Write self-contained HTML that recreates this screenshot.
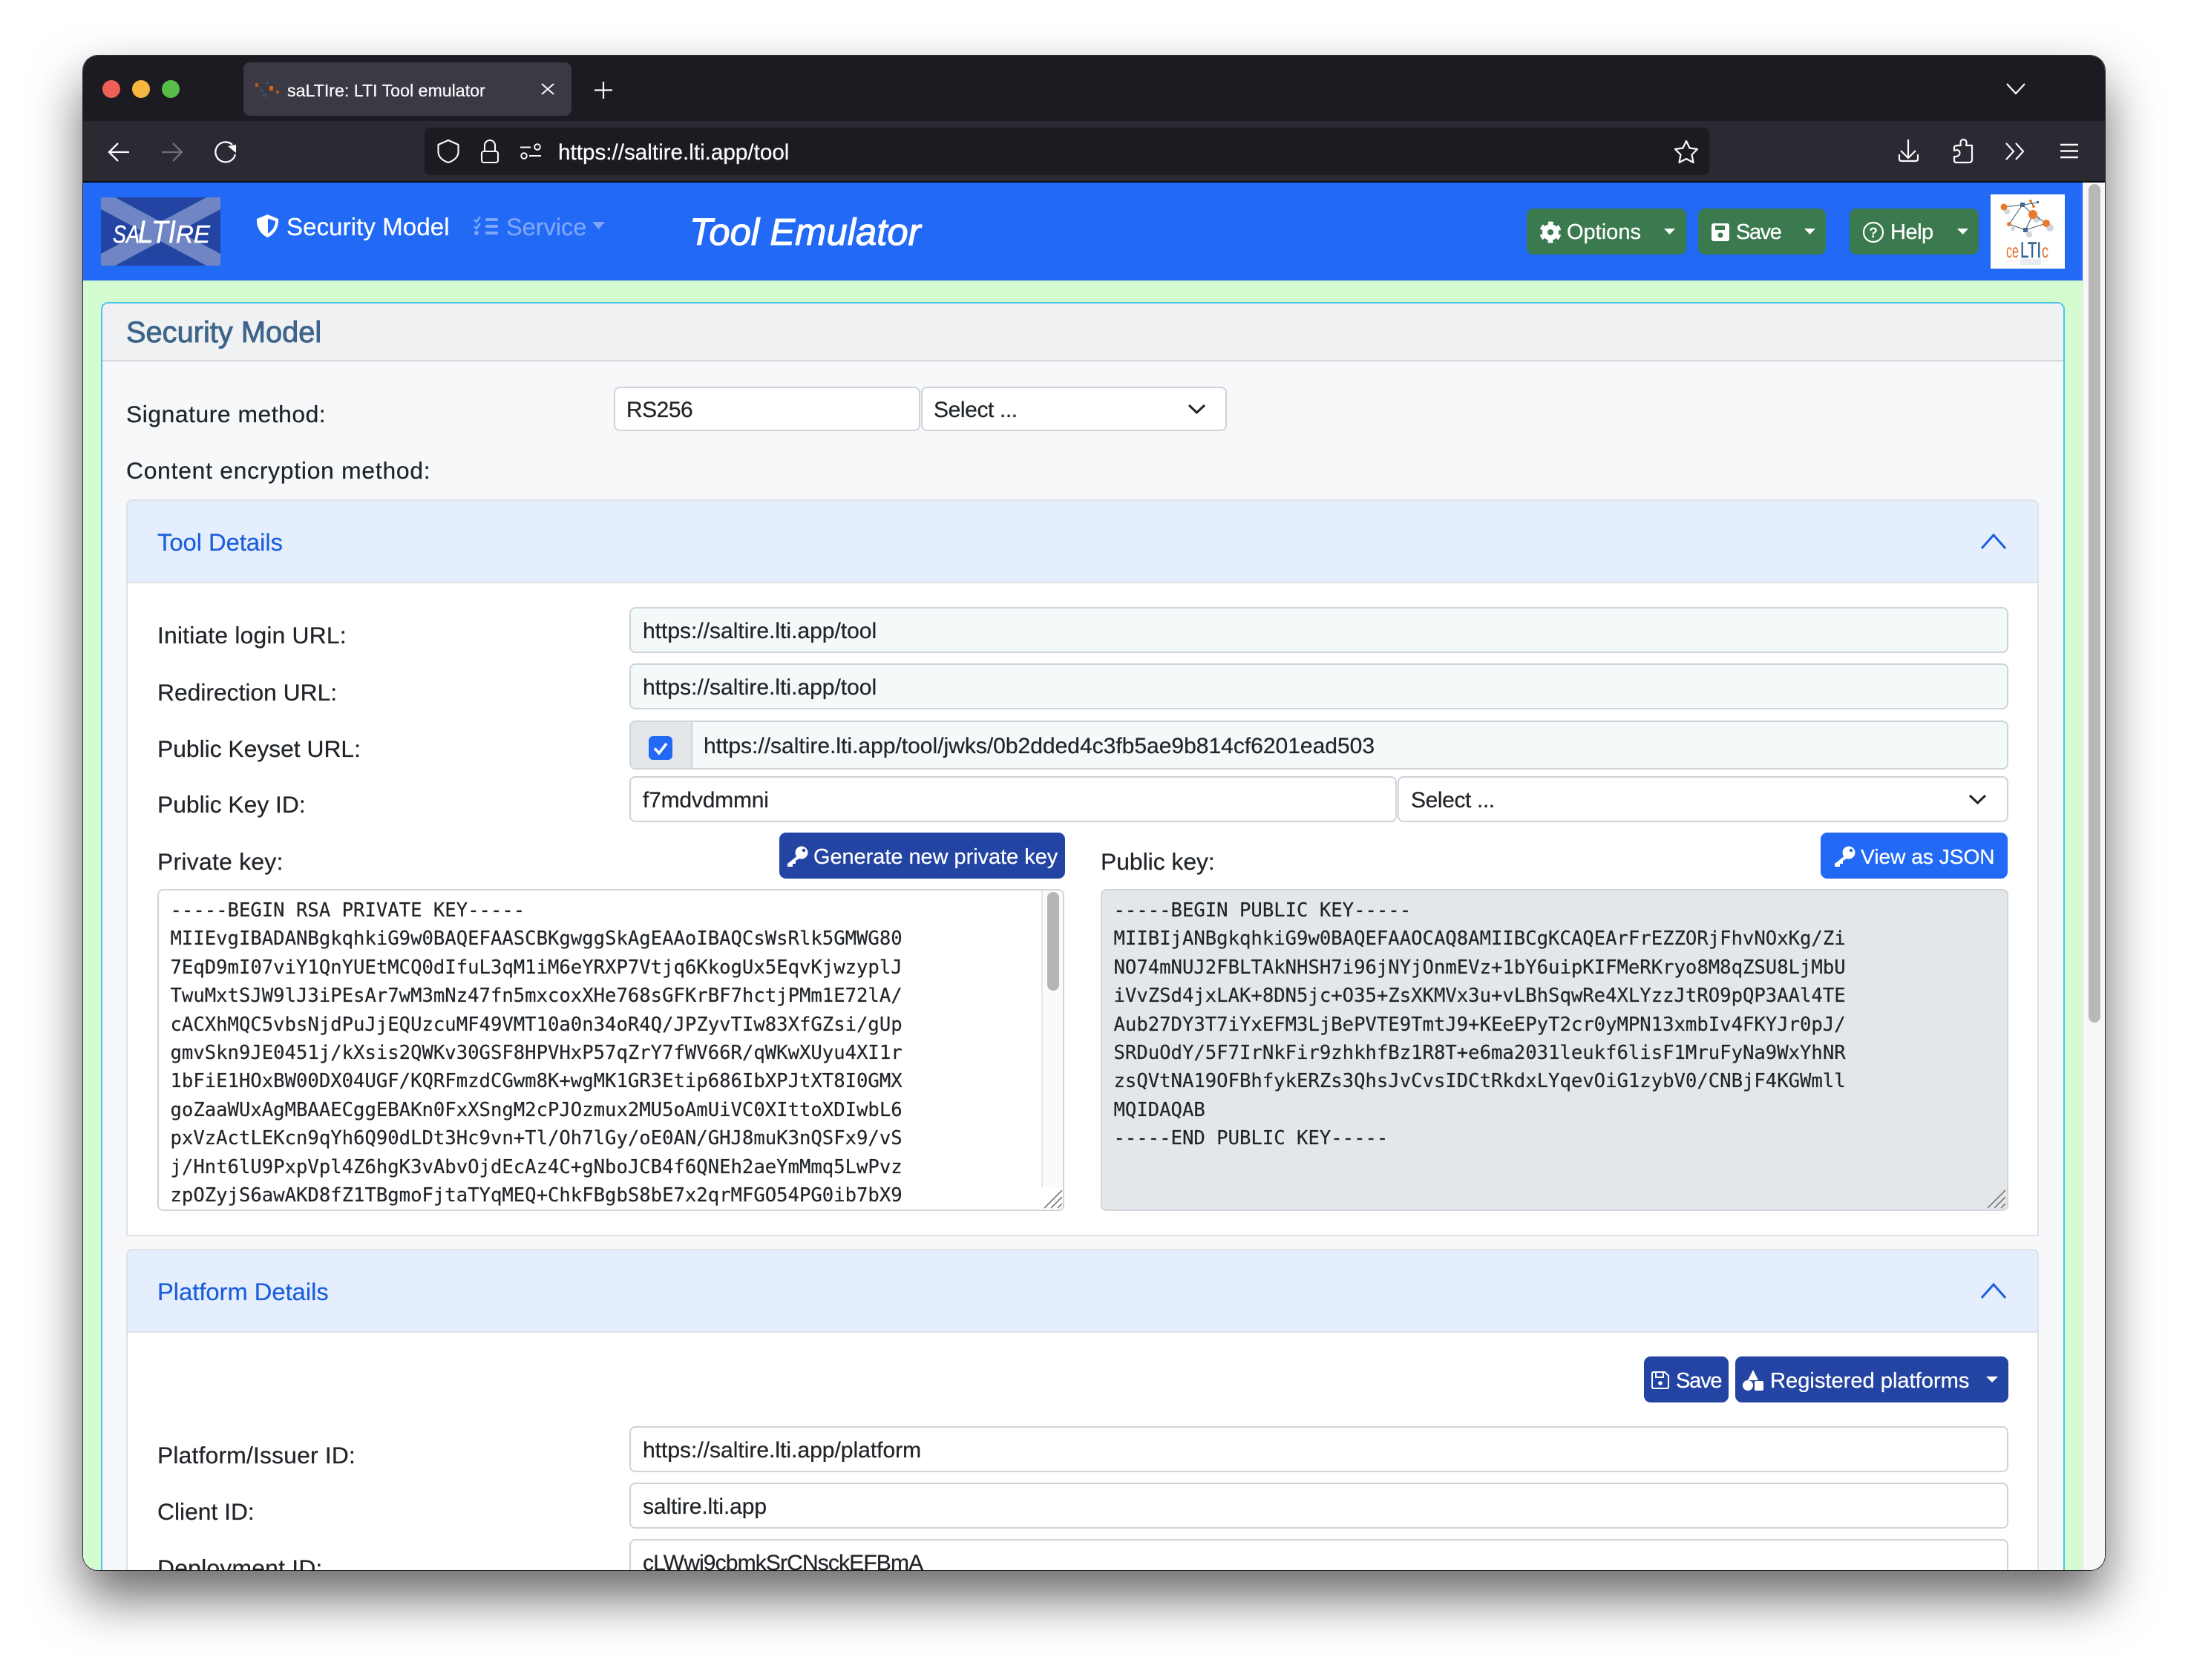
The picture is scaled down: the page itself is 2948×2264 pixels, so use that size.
<!DOCTYPE html>
<html lang="en"><head><meta charset="utf-8"><title>saLTIre: LTI Tool emulator</title>
<style>
html,body{margin:0;padding:0;width:2948px;height:2264px;overflow:hidden;background:#fff}
body{font-family:"Liberation Sans",sans-serif;color:#212529}
.a{position:absolute}
.shadow{position:absolute;left:112px;top:75px;width:2724px;height:2041px;border-radius:20px;box-shadow:0 36px 70px rgba(0,0,0,.6),0 0 0 1px #333}
.win{position:absolute;left:0;top:0;width:2948px;height:2264px;clip-path:inset(75px 112px 148px 112px round 20px);background:#f7f7f7}
.t{position:absolute;white-space:nowrap;line-height:40px;height:40px;-webkit-text-stroke:.25px currentColor}
.lbl{font-size:31.8px;color:#212529;left:212px}
.box{position:absolute;box-sizing:border-box;border:2px solid #ced4da;border-radius:8px;background:#fff;display:flex;align-items:center;padding:4px 0 0 16px;font-size:30px;white-space:nowrap;color:#212529;-webkit-text-stroke:.25px currentColor}
.ro{background:#f4f9f9}
.btn{position:absolute;box-sizing:border-box;border-radius:9px;color:#fff;font-size:29px;display:block}
.green{background:#3b7a4f}.navy{background:#2344a3}.blue{background:#226af5}
.head{position:absolute;left:170px;width:2577px;box-sizing:border-box;background:#e4eefd;border:2px solid #dee2e6;height:113px;border-radius:8px 8px 0 0}
.acc{position:absolute;left:170px;width:2577px;box-sizing:border-box;background:#fff;border:2px solid #dee2e6;border-top:0}
.h{color:#1d5fdb;font-size:32.700px;left:212px}
pre{position:absolute;margin:0;font-family:"DejaVu Sans Mono","Liberation Mono",monospace;font-size:25.6px;line-height:38.4px;color:#212529;-webkit-text-stroke:.2px currentColor}
svg{position:absolute;overflow:visible}
</style></head>
<body>
<div class="shadow"></div>
<div class="win">
  <!-- browser chrome -->
  <div class="a" style="left:112px;top:75px;width:2724px;height:88px;background:#1c1b22"></div>
  <div class="a" style="left:112px;top:163px;width:2724px;height:81px;background:#2b2a33"></div>
  <div class="a" style="left:112px;top:244px;width:2724px;height:2px;background:#0a0a0c"></div>
  <div class="a" style="left:138px;top:108px;width:24px;height:24px;border-radius:50%;background:#ee6055"></div>
  <div class="a" style="left:178px;top:108px;width:24px;height:24px;border-radius:50%;background:#f6b73f"></div>
  <div class="a" style="left:218px;top:108px;width:24px;height:24px;border-radius:50%;background:#57bd4b"></div>
  <div class="a" style="left:328px;top:84px;width:442px;height:72px;border-radius:9px;background:#3a3944"></div>
  <svg class="a" style="left:0;top:0" width="2948" height="300" fill="none">
    <g fill="#b4561e"><rect x="344" y="112" width="4" height="5"/><rect x="363" y="116" width="5" height="6" fill="#d8641a"/><rect x="372" y="122" width="4" height="4"/></g>
    <g fill="#3a4b62"><rect x="354" y="126" width="5" height="5"/><rect x="358" y="109" width="4" height="4"/><rect x="350" y="120" width="4" height="4"/></g>
    <path d="M730 113L746 127M746 113L730 127" stroke="#fbfbfe" stroke-width="2"/>
    <path d="M813 110V133M801 121.500H825" stroke="#fbfbfe" stroke-width="2.200"/>
    <path d="M2704 113L2716 126L2728 113" stroke="#fbfbfe" stroke-width="2.200"/>
    <path d="M174 205H147M159 193L147 205L159 217" stroke="#fbfbfe" stroke-width="2.300"/>
    <path d="M218 205H245M233 193L245 205L233 217" stroke="#6f6f76" stroke-width="2.300"/>
    <path d="M313 195A13.500 13.500 0 1 0 317 208" stroke="#fbfbfe" stroke-width="2.300"/>
    <path d="M307 197L318 195V206Z" fill="#fbfbfe"/>
    <rect x="572" y="172" width="1731" height="64" rx="8" fill="#1c1b22"/>
    <path d="M604 189L617.500 195V205C617.500 212 610.500 217 604 219C597.500 217 590.500 212 590.500 205V195Z" stroke="#fbfbfe" stroke-width="2.100" stroke-linejoin="round"/>
    <rect x="649" y="204" width="22" height="15" rx="3" stroke="#fbfbfe" stroke-width="2.100"/>
    <path d="M653 204V196A7 7 0 0 1 667 196V204" stroke="#fbfbfe" stroke-width="2.100"/>
    <path d="M701 198.500H715M713 210H729" stroke="#fbfbfe" stroke-width="2"/>
    <circle cx="724" cy="198" r="3.800" stroke="#fbfbfe" stroke-width="1.900"/><circle cx="706" cy="210" r="3.800" stroke="#fbfbfe" stroke-width="1.900"/>
    <path d="M2272 190L2276.500 199.500L2287 201L2279.500 208.500L2281.500 219L2272 214L2262.500 219L2264.500 208.500L2257 201L2267.500 199.500Z" stroke="#fbfbfe" stroke-width="2.200" stroke-linejoin="round"/>
    <path d="M2571 188V213M2561 203L2571 213L2581 203M2559 208V214Q2559 217 2562 217H2581Q2584 217 2584 214V208" stroke="#fbfbfe" stroke-width="2.200"/>
    <path d="M2639 196H2642Q2640 188 2646 188Q2651 189 2649 196H2657V215Q2657 219 2653 219H2636Q2633 219 2633 216V211H2636Q2642 209 2640 204Q2638 201 2633 203V198Q2634 196 2639 196Z" stroke="#fbfbfe" stroke-width="2.200" stroke-linejoin="round"/>
    <path d="M2703 193L2713 204L2703 215M2716 193L2726 204L2716 215" stroke="#fbfbfe" stroke-width="2.200"/>
    <path d="M2776 195H2800M2776 203.500H2800M2776 212H2800" stroke="#fbfbfe" stroke-width="2.600"/>
  </svg>
  <div class="t" style="left:387px;top:102px;font-size:23.200px;color:#fbfbfe">saLTIre: LTI Tool emulator</div>
  <div class="t" style="left:752px;top:186px;font-size:29.650px;color:#fbfbfe">https://saltire.lti.app/tool</div>

  <!-- page background -->
  <div class="a" style="left:112px;top:378px;width:2694px;height:1740px;background:#d4fcd0"></div>
  <div class="a" style="left:2806px;top:246px;width:30px;height:1872px;background:#f7f7f7;border-left:1px solid #e8e8e8;box-sizing:border-box"></div>
  <div class="a" style="left:2814px;top:248px;width:16px;height:1130px;border-radius:8px;background:#b8b8b8"></div>

  <!-- nav -->
  <div class="a" style="left:112px;top:246px;width:2694px;height:132px;background:#226af5"></div>
  <svg class="a" style="left:136px;top:266px" width="161" height="92">
    <rect width="161" height="92" fill="#2344a3"/>
    <path d="M0 0H19L161 76V92H142L0 16Z" fill="#7085c3"/>
    <path d="M161 0H142L0 76V92H19L161 16Z" fill="#7085c3"/>
    <g font-family="Liberation Sans" font-style="italic" fill="#fff" stroke="#fff" stroke-width=".5">
    <text x="16" y="61" font-size="33" textLength="36" lengthAdjust="spacingAndGlyphs">SA</text>
    <text x="50" y="61" font-size="43" textLength="51" lengthAdjust="spacingAndGlyphs">LTI</text>
    <text x="101" y="61" font-size="33" textLength="46" lengthAdjust="spacingAndGlyphs">RE</text></g>
  </svg>
  <svg class="a" style="left:0;top:0" width="2948" height="400">
    <path d="M360.500 289L375 295C375.500 308 369 316 360.500 320C352 316 345.500 308 346 295Z" fill="#fff"/>
    <path d="M361 294.500V314.500C367 311 371 305 371 298Z" fill="#226af5"/>
    <g fill="#7ea6f9"><rect x="654" y="294" width="17" height="4" rx="1.500"/><rect x="654" y="303" width="17" height="4" rx="1.500"/><rect x="654" y="312" width="17" height="4" rx="1.500"/><circle cx="642" cy="314" r="3"/><path d="M639 296L642 299L647 292" stroke="#7ea6f9" stroke-width="2.500" fill="none"/><path d="M639 305L642 308L647 301" stroke="#7ea6f9" stroke-width="2.500" fill="none"/>
    <path d="M798 299H815L806.500 309Z"/></g>
  </svg>
  <div class="t" style="left:386px;top:286px;font-size:33px;letter-spacing:.1px;color:#fff">Security Model</div>
  <div class="t" style="left:682px;top:286px;font-size:32.500px;color:#7ea6f9">Service</div>
  <div class="t" style="left:929px;top:293px;font-size:50.800px;color:#fff;font-style:italic;-webkit-text-stroke:1.100px #fff;line-height:40px">Tool Emulator</div>

  <div class="btn green" style="left:2057px;top:281px;width:215px;height:62px"></div>
  <div class="btn green" style="left:2288px;top:281px;width:172px;height:62px"></div>
  <div class="btn green" style="left:2492px;top:281px;width:174px;height:62px"></div>
  <div class="t" style="left:2111px;top:293px;font-size:29px;color:#fff">Options</div>
  <div class="t" style="left:2339px;top:293px;font-size:29px;color:#fff;letter-spacing:-1.400px">Save</div>
  <div class="t" style="left:2547px;top:293px;font-size:29px;color:#fff;letter-spacing:-.500px">Help</div>
  <svg class="a" style="left:0;top:0" width="2948" height="400">
    <circle cx="2089" cy="313" r="7.500" fill="none" stroke="#fff" stroke-width="7"/>
    <circle cx="2089" cy="313" r="12" fill="none" stroke="#fff" stroke-width="5" stroke-dasharray="6.500 6.070" transform="rotate(14.500 2089 313)"/>
    <rect x="2306" y="301" width="24" height="24" rx="3" fill="#fff"/>
    <rect x="2311" y="304" width="13" height="6" fill="#3b7a4f"/><circle cx="2318" cy="317" r="3.500" fill="#3b7a4f"/>
    <circle cx="2524" cy="313" r="13" fill="none" stroke="#fff" stroke-width="2.200"/>
    <text x="2524" y="320" font-size="19" font-family="Liberation Sans" font-weight="bold" text-anchor="middle" fill="#fff">?</text>
    <path d="M2242 308H2257L2249.500 316ZM2431 308H2446L2438.500 316ZM2637 308H2652L2644.500 316Z" fill="#fff"/>
  </svg>
  <svg class="a" style="left:2682px;top:262px;background:#fff" width="100" height="100" font-family="Liberation Sans">
    <g fill="#b5bcc4" opacity=".6"><circle cx="22" cy="23" r="4"/><circle cx="62" cy="33" r="5"/><circle cx="80" cy="45" r="5"/><circle cx="30" cy="46" r="3"/><circle cx="52" cy="54" r="4"/></g>
    <path d="M18 17L43 14L25 40L47 48L75 39L57 27L47 48M43 14L57 27M43 14L64 11M54 9L58 16" stroke="#44505c" stroke-width="1" fill="none"/>
    <g fill="#e87a2a"><circle cx="18" cy="17" r="4.500"/><circle cx="54" cy="9" r="2"/><circle cx="58" cy="16" r="2"/><circle cx="57" cy="27" r="6"/><circle cx="75" cy="39" r="5"/><circle cx="25" cy="40" r="3"/></g>
    <g fill="#3d6a97"><rect x="40" y="11" width="6" height="6"/><rect x="44" y="45" width="6" height="6"/><rect x="62" y="9" width="3" height="3"/></g>
    <text x="21" y="85" font-size="26" fill="#e0702a" textLength="17" lengthAdjust="spacingAndGlyphs">ce</text>
    <text x="40" y="85" font-size="30" fill="#2f6590" textLength="28" lengthAdjust="spacingAndGlyphs" stroke="#2f6590" stroke-width=".5">LTI</text>
    <text x="69" y="85" font-size="26" fill="#e0702a" textLength="9" lengthAdjust="spacingAndGlyphs">c</text>
    <g opacity=".25"><rect x="40" y="87" width="28" height="8" fill="#9db5cc"/><path d="M21 92Q26 87 30 90M31 92Q34 87 38 90M70 92Q74 87 78 90" stroke="#e0702a" fill="none"/></g>
  </svg>

  <!-- card -->
  <div class="a" style="left:136px;top:407px;width:2646px;height:1800px;box-sizing:border-box;border:2px solid #4ec3ec;border-radius:10px;background:#f7f8fa"></div>
  <div class="a" style="left:138px;top:409px;width:2642px;height:76px;border-bottom:2px solid #d4d6d9;border-radius:8px 8px 0 0;background:#eff1f3"></div>
  <div class="t" style="left:170px;top:428px;font-size:39.800px;color:#3f6489;-webkit-text-stroke:.9px #3f6489">Security Model</div>

  <div class="t lbl" style="top:538px;left:170px;letter-spacing:.55px">Signature method:</div>
  <div class="box" style="left:827px;top:521px;width:413px;height:60px;letter-spacing:-.5px;padding-left:15px">RS256</div>
  <div class="box" style="left:1241px;top:521px;width:412px;height:60px;letter-spacing:-.4px;padding-left:15px">Select ...</div>
  <div class="t lbl" style="top:614px;left:170px;letter-spacing:.76px">Content encryption method:</div>

  <!-- Tool Details -->
  <div class="head" style="top:673px"></div>
  <div class="t h" style="top:711px">Tool Details</div>
  <div class="acc" style="top:786px;height:880px"></div>
  <div class="t lbl" style="top:836px;letter-spacing:.2px">Initiate login URL:</div>
  <div class="box ro" style="left:848px;top:818px;width:1858px;height:62px">https://saltire.lti.app/tool</div>
  <div class="t lbl" style="top:913px">Redirection URL:</div>
  <div class="box ro" style="left:848px;top:894px;width:1858px;height:62px">https://saltire.lti.app/tool</div>
  <div class="t lbl" style="top:989px">Public Keyset URL:</div>
  <div class="box ro" style="left:848px;top:971px;width:1858px;height:66px;padding-left:98px">https://saltire.lti.app/tool/jwks/0b2dded4c3fb5ae9b814cf6201ead503</div>
  <div class="a" style="left:850px;top:973px;width:81px;height:62px;background:#e4e7ea;border-right:2px solid #ced4da;border-radius:6px 0 0 6px"></div>
  <div class="t lbl" style="top:1064px">Public Key ID:</div>
  <div class="box" style="left:848px;top:1046px;width:1034px;height:62px;letter-spacing:-.2px">f7mdvdmmni</div>
  <div class="box" style="left:1883px;top:1046px;width:823px;height:62px;letter-spacing:-.4px">Select ...</div>
  <div class="t lbl" style="top:1141px;letter-spacing:.3px">Private key:</div>
  <div class="t lbl" style="top:1141px;left:1483px">Public key:</div>
  <div class="btn navy" style="left:1050px;top:1122px;width:385px;height:62px"></div>
  <div class="t" style="left:1096px;top:1135px;font-size:28.900px;color:#fff">Generate new private key</div>
  <div class="btn blue" style="left:2453px;top:1122px;width:252px;height:62px"></div>
  <div class="t" style="left:2507px;top:1135px;font-size:28.100px;color:#fff">View as JSON</div>

  <div class="a" style="left:212px;top:1198px;width:1222px;height:434px;box-sizing:border-box;border:2px solid #ced4da;border-radius:8px;background:#fff"></div>
  <pre style="left:229.500px;top:1208px">-----BEGIN RSA PRIVATE KEY-----
MIIEvgIBADANBgkqhkiG9w0BAQEFAASCBKgwggSkAgEAAoIBAQCsWsRlk5GMWG80
7EqD9mI07viY1QnYUEtMCQ0dIfuL3qM1iM6eYRXP7Vtjq6KkogUx5EqvKjwzyplJ
TwuMxtSJW9lJ3iPEsAr7wM3mNz47fn5mxcoxXHe768sGFKrBF7hctjPMm1E72lA/
cACXhMQC5vbsNjdPuJjEQUzcuMF49VMT10a0n34oR4Q/JPZyvTIw83XfGZsi/gUp
gmvSkn9JE0451j/kXsis2QWKv30GSF8HPVHxP57qZrY7fWV66R/qWKwXUyu4XI1r
1bFiE1HOxBW00DX04UGF/KQRFmzdCGwm8K+wgMK1GR3Etip686IbXPJtXT8I0GMX
goZaaWUxAgMBAAECggEBAKn0FxXSngM2cPJOzmux2MU5oAmUiVC0XIttoXDIwbL6
pxVzActLEKcn9qYh6Q90dLDt3Hc9vn+Tl/Oh7lGy/oE0AN/GHJ8muK3nQSFx9/vS
j/Hnt6lU9PxpVpl4Z6hgK3vAbvOjdEcAz4C+gNboJCB4f6QNEh2aeYmMmq5LwPvz
zpOZyjS6awAKD8fZ1TBgmoFjtaTYqMEQ+ChkFBgbS8bE7x2qrMFGO54PG0ib7bX9</pre>
  <div class="a" style="left:1403px;top:1200px;width:29px;height:400px;background:#fafafa;border-left:2px solid #e6e6e6;box-sizing:border-box;border-radius:0 6px 0 0"></div>
  <div class="a" style="left:1411px;top:1202px;width:16px;height:133px;border-radius:8px;background:#b5b5b5"></div>

  <div class="a" style="left:1483px;top:1198px;width:1223px;height:434px;box-sizing:border-box;border:2px solid #ced4da;border-radius:8px;background:#e4e7ea"></div>
  <pre style="left:1500.500px;top:1208px">-----BEGIN PUBLIC KEY-----
MIIBIjANBgkqhkiG9w0BAQEFAAOCAQ8AMIIBCgKCAQEArFrEZZORjFhvNOxKg/Zi
NO74mNUJ2FBLTAkNHSH7i96jNYjOnmEVz+1bY6uipKIFMeRKryo8M8qZSU8LjMbU
iVvZSd4jxLAK+8DN5jc+O35+ZsXKMVx3u+vLBhSqwRe4XLYzzJtRO9pQP3AAl4TE
Aub27DY3T7iYxEFM3LjBePVTE9TmtJ9+KEeEPyT2cr0yMPN13xmbIv4FKYJr0pJ/
SRDuOdY/5F7IrNkFir9zhkhfBz1R8T+e6ma2031leukf6lisF1MruFyNa9WxYhNR
zsQVtNA19OFBhfykERZs3QhsJvCvsIDCtRkdxLYqevOiG1zybV0/CNBjF4KGWmll
MQIDAQAB
-----END PUBLIC KEY-----</pre>

  <!-- Platform Details -->
  <div class="head" style="top:1683px"></div>
  <div class="t h" style="top:1721px">Platform Details</div>
  <div class="acc" style="top:1796px;height:420px"></div>
  <div class="btn navy" style="left:2215px;top:1828px;width:114px;height:62px"></div>
  <div class="t" style="left:2258px;top:1841px;font-size:29px;color:#fff;letter-spacing:-1.200px">Save</div>
  <div class="btn navy" style="left:2338px;top:1828px;width:368px;height:62px"></div>
  <div class="t" style="left:2385px;top:1841px;font-size:29.100px;color:#fff">Registered platforms</div>
  <div class="t lbl" style="top:1941px;letter-spacing:.2px">Platform/Issuer ID:</div>
  <div class="box" style="left:848px;top:1922px;width:1858px;height:62px">https://saltire.lti.app/platform</div>
  <div class="t lbl" style="top:2017px">Client ID:</div>
  <div class="box" style="left:848px;top:1998px;width:1858px;height:62px;letter-spacing:-.1px">saltire.lti.app</div>
  <div class="t lbl" style="top:2093px;letter-spacing:.25px">Deployment ID:</div>
  <div class="box" style="left:848px;top:2074px;width:1858px;height:62px;letter-spacing:-.86px">cLWwi9cbmkSrCNsckEFBmA</div>

  <!-- page icons -->
  <svg class="a" style="left:0;top:0" width="2948" height="2264" fill="none">
    <path d="M1602 546L1612.500 556L1623 546" stroke="#212529" stroke-width="3"/>
    <path d="M2654 1072L2664.500 1082L2675 1072" stroke="#212529" stroke-width="3"/>
    <path d="M2670 739L2686 721L2702 739" stroke="#1d5fdb" stroke-width="3"/>
    <path d="M2670 1749L2686 1731L2702 1749" stroke="#1d5fdb" stroke-width="3"/>
    <rect x="874" y="992" width="32" height="32" rx="6" fill="#226af5"/>
    <path d="M882 1008.500L888 1015L898 1002" stroke="#fff" stroke-width="3.600"/>
    <circle cx="1080" cy="1149" r="8.500" fill="#fff"/><path d="M1076 1152L1061 1164V1168H1068V1164H1072V1160L1082 1154Z" fill="#fff"/><circle cx="1083" cy="1146" r="2.200" fill="#2344a3"/>
    <circle cx="2491" cy="1149" r="8.500" fill="#fff"/><path d="M2487 1152L2472 1164V1168H2479V1164H2483V1160L2493 1154Z" fill="#fff"/><circle cx="2494" cy="1146" r="2.200" fill="#226af5"/>
    <path d="M2226 1851Q2226 1849 2228 1849H2243L2248 1854V1869Q2248 1871 2246 1871H2228Q2226 1871 2226 1869Z" stroke="#fff" stroke-width="2"/>
    <path d="M2231 1850V1856H2241V1850" stroke="#fff" stroke-width="2"/><circle cx="2237" cy="1864" r="2.800" fill="#fff"/>
    <path d="M2362 1846L2369 1860H2355Z" fill="#fff"/><circle cx="2355" cy="1867" r="7" fill="#fff"/><rect x="2364" y="1861" width="12" height="13" rx="2" fill="#fff"/>
    <path d="M2676 1855H2692L2684 1863Z" fill="#fff"/>
    <path d="M1431 1604L1407 1628M1431 1613L1416 1628M1431 1622L1425 1628" stroke="#7a7a7a" stroke-width="1.600"/>
    <path d="M2702 1604L2678 1628M2702 1613L2687 1628M2702 1622L2696 1628" stroke="#7a7a7a" stroke-width="1.600"/>
  </svg>
</div>
</body></html>
